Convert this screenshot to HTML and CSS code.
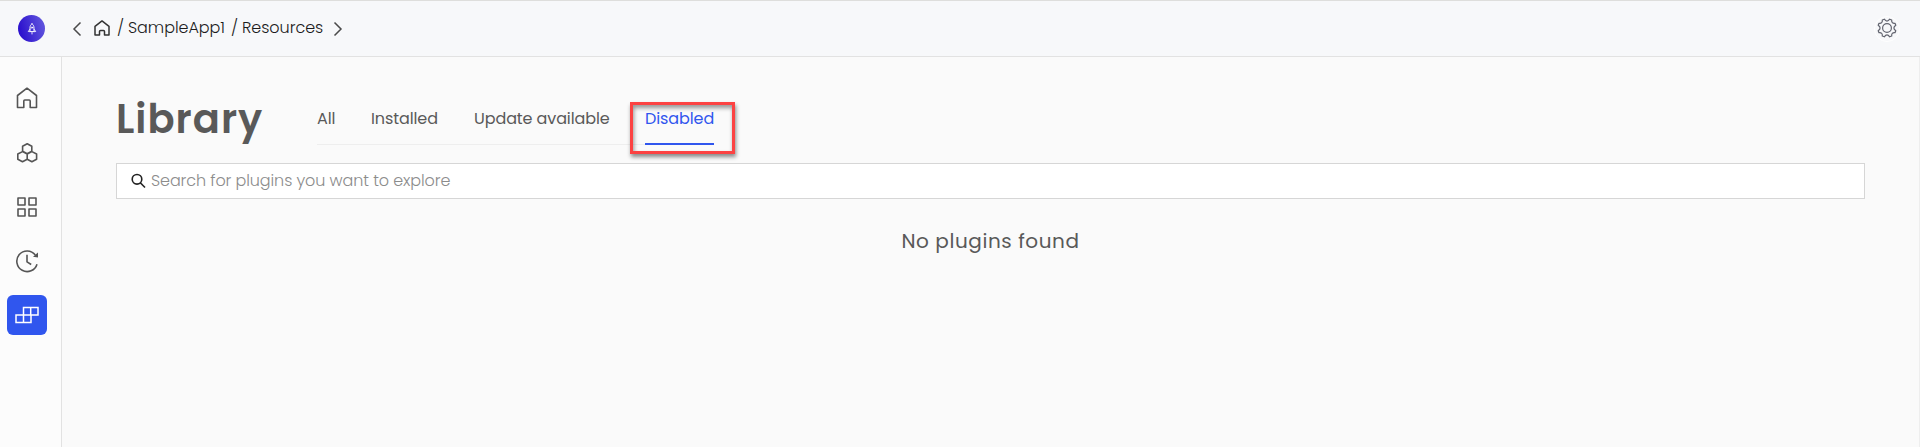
FILE: index.html
```html
<!DOCTYPE html>
<html lang="en">
<head>
<meta charset="utf-8">
<title>Library</title>
<link rel="stylesheet" href="styles.css">
</head>
<body>
<div class="app">
  <header class="topbar">
    <div class="logo">
      <svg width="10" height="12" viewBox="0 0 10 12" fill="none" stroke="#fff" stroke-width=".9" stroke-linejoin="round" stroke-linecap="round"><path d="M5 .7C3.400 2 3 3.300 3 5v3.500h4V5C7 3.300 6.600 2 5 .7zM3 6.200L1.300 8.500 3 8.700M7 6.200l1.700 2.300-1.700.2M5 9v2"/><circle cx="5" cy="4.600" r=".7"/></svg>
    </div>
    <nav class="crumbs">
      <svg class="prev" width="10" height="16" viewBox="0 0 10 16"><path d="M8.500 1.500L2 8l6.500 6.500"/></svg>
      <svg class="crumb-home" width="16" height="16" viewBox="0 0 16 16"><path d="M1 6.300L8 .9l7 5.400V15h-4.500v-3.500a1 1 0 0 0-1-1h-3a1 1 0 0 0-1 1V15H1z"/></svg>
      <span class="slash">/</span><span class="crumb app-name">SampleApp1</span><span class="slash">/</span><span class="crumb section">Resources</span>
      <svg class="next" width="10" height="16" viewBox="0 0 10 16"><path d="M1.500 1.500L8 8l-6.500 6.500"/></svg>
    </nav>
    <div class="settings">
      <svg width="20" height="20" viewBox="0 0 20 20" fill="none" stroke="#62646f" stroke-width="1.200" stroke-linejoin="round"><circle cx="10" cy="10" r="4.400"/><path d="M7.300 1.200Q10 5 12.700 1.200L14.700 2Q14.300 5.700 18 5.300L18.800 7.300Q15 10 18.800 12.700L18 14.700Q14.300 14.300 14.700 18L12.700 18.800Q10 15 7.300 18.800L5.300 18Q5.700 14.300 2 14.700L1.200 12.700Q5 10 1.200 7.300L2 5.300Q5.700 5.700 5.300 2z"/></svg>
    </div>
  </header>
  <div class="body">
    <aside class="sidebar">
      <a class="item"><svg class="home" width="22" height="22" viewBox="0 0 22 22"><path d="M1.500 8.500L11 1.200l9.500 7.300v12h-6.300v-6.500a1 1 0 0 0-1-1H8.800a1 1 0 0 0-1 1v6.500H1.500z"/></svg></a>
      <a class="item"><svg width="22" height="22" viewBox="0 0 22 22"><path d="M11.200 1.700l4.600 2.500v5.100l-4.600 2.400-4.600-2.400V4.200zM6.500 9.600l4.700 2.400v5.200l-4.700 2.500-4.700-2.500V12zM15.900 9.600l4.700 2.400v5.200l-4.700 2.500-4.700-2.500V12z"/></svg></a>
      <a class="item"><svg width="22" height="22" viewBox="0 0 22 22"><path d="M2 2h7v7H2zM13 2h7v7h-7zM2 13h7v7H2zM13 13h7v7h-7z"/></svg></a>
      <a class="item"><svg width="24" height="24" viewBox="0 0 24 24"><path d="M22 15.200A10.300 10.300 0 1 1 20.300 6M12 5.800v7l4.200 2.700"/><path class="solid" d="M23 3.500v5l-5-.8z"/></svg></a>
      <a class="item active"><svg width="24" height="18" viewBox="0 0 24 18"><path d="M8.500 1.500H23V9H8.500zM1 9h15v7.500H1zM15.700 1.500V9M8.500 9v7.500"/></svg></a>
    </aside>
    <main class="content">
      <div class="heading">
        <h1>Library</h1>
        <div class="tabs">
          <a class="tab t-all">All</a><a class="tab t-inst">Installed</a><a class="tab t-upd">Update available</a><a class="tab t-dis selected">Disabled<span class="highlight"></span></a>
        </div>
      </div>
      <div class="search">
        <svg width="15" height="16" viewBox="0 0 15 16"><circle cx="6" cy="6.300" r="4.800"/><path d="M9.300 9.700l4.700 4.800"/></svg>
        <span class="placeholder">Search for plugins you want to explore</span>
      </div>
      <p class="empty"><span>No plugins found</span></p>
    </main>
  </div>
</div>
</body>
</html>
```
FILE: styles.css
```css
* { box-sizing: border-box; }
body { margin: 0; font-family: Poppins, Inter, sans-serif; color: #595959; background: #fafafa; }
.app { height: 447px; display: flex; flex-direction: column; overflow: hidden; }
svg { display: block; flex: none; }
.topbar { height: 57px; flex: none; display: flex; align-items: center; background: #f7f8fa; border-top: 1px solid #dededc; border-bottom: 1px solid #e2e2e2; padding: 0 20px 0 18px; }
.logo { width: 27px; height: 27px; border-radius: 50%; background: linear-gradient(75deg, #2d12ce 15%, #5c50dc 85%); display: flex; align-items: center; justify-content: center; }
.crumbs { display: flex; align-items: center; margin-left: 27px; flex: 1; color: #1c1c1c; font-size: 16px; font-weight: 300; letter-spacing: -.05px; line-height: 24px; white-space: nowrap; }
.crumbs svg { fill: none; stroke: #4a4a4a; stroke-width: 1.5; }
.crumbs .crumb-home { margin: -1px 7px 0 12px; stroke: #333; stroke-linejoin: round; }
.slash { width: 11px; margin-top: -2px; }
.crumb { margin-top: -2px; }
.app-name { width: 103px; }
.section { width: 91px; }
.settings { width: 26px; height: 26px; border: 1px solid #fff; border-radius: 50%; display: flex; align-items: center; justify-content: center; padding-bottom: 2px; }
.body { flex: 1; display: flex; }
.sidebar { width: 62px; flex: none; background: #fcfcfc; border-right: 1px solid #e2e2e2; padding: 22px 0 0 7px; display: flex; flex-direction: column; gap: 14px; }
.item { width: 40px; height: 40px; border-radius: 6px; display: flex; align-items: center; justify-content: center; }
.item svg { fill: none; stroke: #555; stroke-width: 1.6; stroke-linejoin: round; }
.item .home { margin-bottom: 2px; }
.item .solid { fill: #555; stroke: none; }
.item.active { background: #3056ee; }
.item.active svg { stroke: #fff; stroke-width: 1.5; stroke-linejoin: miter; }
.content { flex: 1; padding: 33px 54px 0 54px; border-right: 1px solid #eee; }
.heading { display: flex; height: 73px; }
h1 { margin: 0; width: 201px; font-size: 40px; font-weight: 600; line-height: 58px; letter-spacing: 1px; }
.tabs { display: flex; align-self: flex-start; height: 55px; padding-top: 17px; border-bottom: 1px solid #eee; font-size: 16px; line-height: 24px; letter-spacing: -.1px; white-space: nowrap; }
.tab { position: relative; height: 38px; }
.t-all { width: 54px; }
.t-inst { width: 103px; }
.t-upd { width: 171px; }
.t-dis { width: 69px; }
.selected { color: #3056ee; border-bottom: 2px solid #3056ee; }
.highlight { position: absolute; left: -15px; top: -5px; width: 105px; height: 52px; border: 3px solid #fc4242; box-shadow: 1px 3px 4px rgba(0,0,0,.45), inset 1px 3px 4px rgba(0,0,0,.4); }
.search { height: 36px; background: #fff; border: 1px solid #d6d6d6; display: flex; align-items: center; padding-left: 14px; color: #8c8c8c; font-size: 16px; font-weight: 300; letter-spacing: -.1px; }
.search svg { fill: none; stroke: #222; stroke-width: 1.6; margin-right: 5px; }
.placeholder { margin-top: -2px; }
.empty { margin: 27px 0 0; text-align: center; font-size: 20px; line-height: 30px; letter-spacing: .57px; }
```
